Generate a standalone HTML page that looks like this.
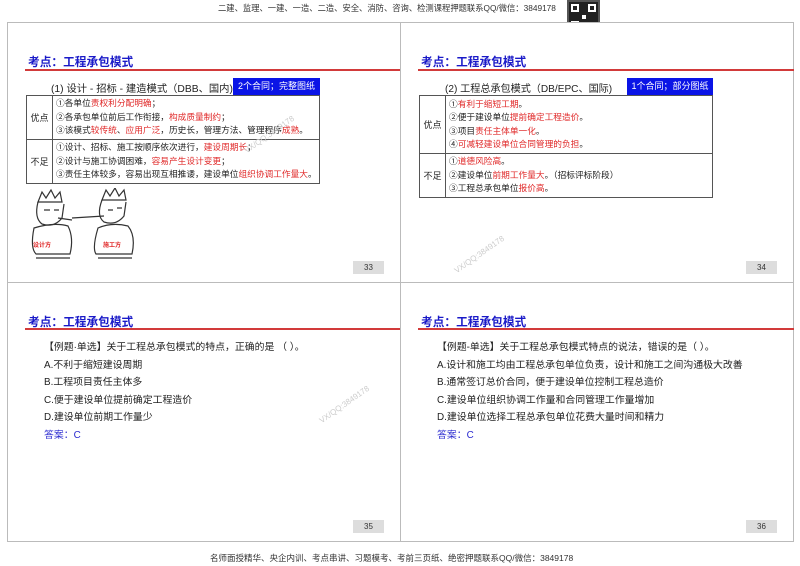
<!DOCTYPE html>
<html><head><meta charset="utf-8">
<style>
*{margin:0;padding:0;box-sizing:border-box}
body{width:800px;height:566px;background:#fff;position:relative;overflow:hidden;font-family:"Liberation Sans","Noto Sans CJK SC",sans-serif;color:#222}
.a{position:absolute;white-space:nowrap}
.slide{position:absolute;border:1px solid #bbb;background:#fff}
.title{position:absolute;font-size:11.7px;font-weight:bold;color:#1a1ac8}
.rl{position:absolute;height:2px;background:#d23a3a}
.pn{position:absolute;width:31px;height:13px;background:#ddd;font-size:8px;text-align:center;line-height:13px;color:#333}
.blue{position:absolute;background:#0a14e6;color:#fff;font-size:9px;text-align:center;line-height:17px;height:17px}
table{position:absolute;border-collapse:collapse;font-size:8.7px;table-layout:fixed}
td{border:1.3px solid #555;vertical-align:middle;white-space:nowrap}
td.l{width:26px;text-align:center;font-size:9px}
td.c{padding:0 3px;line-height:13.4px}
.r{color:#e02a2a}
.q{position:absolute;font-size:9.9px;line-height:17.5px;color:#222;white-space:nowrap}
.ans{color:#2a2ad0}
.wm{position:absolute;font-size:8px;color:#ccc;transform:rotate(-35deg);white-space:nowrap}
</style></head><body>
<div class="a" style="left:218px;top:2px;font-size:8.3px;color:#333">二建、监理、一建、一造、二造、安全、消防、咨询、检测课程押题联系QQ/微信：3849178</div>
<div class="a" style="left:567px;top:0;width:33px;height:33px;background:#222;border:2px solid #555">
<div style="position:absolute;left:2px;top:2px;width:8px;height:8px;border:2px solid #fff"></div>
<div style="position:absolute;right:2px;top:2px;width:8px;height:8px;border:2px solid #fff"></div>
<div style="position:absolute;left:2px;bottom:2px;width:8px;height:8px;border:2px solid #fff"></div>
<div style="position:absolute;left:13px;top:13px;width:4px;height:4px;background:#fff"></div></div>

<div class="slide" style="left:7px;top:22px;width:394px;height:261px"></div>
<div class="slide" style="left:400px;top:22px;width:394px;height:261px"></div>
<div class="slide" style="left:7px;top:282px;width:394px;height:260px"></div>
<div class="slide" style="left:400px;top:282px;width:394px;height:260px"></div>

<!-- slide 33 -->
<div class="title" style="left:28px;top:53px">考点：工程承包模式</div>
<div class="rl" style="left:25px;top:69px;width:375px"></div>
<div class="a" style="left:51px;top:80px;font-size:10.3px">(1) 设计 - 招标 - 建造模式（DBB、国内)</div>
<div class="blue" style="left:233px;top:78px;width:87px">2个合同；完整图纸</div>
<table style="left:26px;top:95px;width:294px">
<tr style="height:44px"><td class="l">优点</td><td class="c">①各单位<span class="r">责权利分配明确</span>；<br>②各承包单位前后工作衔接，<span class="r">构成质量制约</span>；<br>③该模式<span class="r">较传统</span>、<span class="r">应用广泛</span>，历史长，管理方法、管理程序<span class="r">成熟</span>。</td></tr>
<tr style="height:44px"><td class="l">不足</td><td class="c">①设计、招标、施工按顺序依次进行，<span class="r">建设周期长</span>；<br>②设计与施工协调困难，<span class="r">容易产生设计变更</span>；<br>③责任主体较多，容易出现互相推诿，建设单位<span class="r">组织协调工作量大</span>。</td></tr>
</table>
<svg class="a" style="left:24px;top:188px" width="120" height="74" viewBox="0 0 120 74" fill="none" stroke="#333" stroke-width="1.2">
<path d="M14 14 L18 4 L22 10 L27 2 L31 10 L36 4 L38 14 Z"/>
<path d="M14 14 Q10 30 18 36 Q30 40 38 30 L40 16"/>
<path d="M20 22 l6 0 M30 22 l5 0 M34 30 l14 2"/>
<path d="M10 40 Q6 60 12 66 L46 66 Q50 50 44 38 Q30 34 10 40Z"/>
<path d="M78 12 L82 2 L86 8 L91 0 L95 8 L100 2 L102 12 Z"/>
<path d="M78 12 Q72 28 80 34 Q92 38 100 28 L102 14"/>
<path d="M84 22 l5 0 M93 20 l5 0 M48 30 L80 28"/>
<path d="M74 40 Q68 60 72 66 L108 66 Q112 48 104 38 Q88 34 74 40Z"/>
<path d="M12 70 l34 0 M74 70 l34 0"/>
</svg>
<div class="a" style="left:33px;top:240px;font-size:6px;color:#e02a2a;font-weight:bold">设计方</div>
<div class="a" style="left:103px;top:240px;font-size:6px;color:#e02a2a;font-weight:bold">施工方</div>
<div class="pn" style="left:353px;top:261px">33</div>

<!-- slide 34 -->
<div class="title" style="left:421px;top:53px">考点：工程承包模式</div>
<div class="rl" style="left:418px;top:69px;width:376px"></div>
<div class="a" style="left:445px;top:80px;font-size:10.1px">(2) 工程总承包模式（DB/EPC、国际)</div>
<div class="blue" style="left:627px;top:78px;width:86px">1个合同；部分图纸</div>
<table style="left:419px;top:95px;width:294px">
<tr style="height:58px"><td class="l">优点</td><td class="c">①<span class="r">有利于缩短工期</span>。<br>②便于建设单位<span class="r">提前确定工程造价</span>。<br>③项目<span class="r">责任主体单一化</span>。<br>④<span class="r">可减轻建设单位合同管理的负担</span>。</td></tr>
<tr style="height:44px"><td class="l">不足</td><td class="c">①<span class="r">道德风险高</span>。<br>②建设单位<span class="r">前期工作量大</span>。（招标评标阶段）<br>③工程总承包单位<span class="r">报价高</span>。</td></tr>
</table>
<div class="pn" style="left:746px;top:261px">34</div>

<!-- slide 35 -->
<div class="title" style="left:28px;top:313px">考点：工程承包模式</div>
<div class="rl" style="left:25px;top:328px;width:375px"></div>
<div class="q" style="left:44px;top:339px">【例题·单选】关于工程总承包模式的特点，正确的是 （ ）。<br>A.不利于缩短建设周期<br>B.工程项目责任主体多<br>C.便于建设单位提前确定工程造价<br>D.建设单位前期工作量少<br><span class="ans">答案：C</span></div>
<div class="pn" style="left:353px;top:520px">35</div>

<!-- slide 36 -->
<div class="title" style="left:421px;top:313px">考点：工程承包模式</div>
<div class="rl" style="left:418px;top:328px;width:376px"></div>
<div class="q" style="left:437px;top:339px">【例题-单选】关于工程总承包模式特点的说法，错误的是（ ）。<br>A.设计和施工均由工程总承包单位负责，设计和施工之间沟通极大改善<br>B.通常签订总价合同，便于建设单位控制工程总造价<br>C.建设单位组织协调工作量和合同管理工作量增加<br>D.建设单位选择工程总承包单位花费大量时间和精力<br><span class="ans">答案：C</span></div>
<div class="pn" style="left:746px;top:520px">36</div>

<div class="wm" style="left:240px;top:130px">VX/QQ:3849178</div>
<div class="wm" style="left:450px;top:250px">VX/QQ:3849178</div>
<div class="wm" style="left:315px;top:400px">VX/QQ:3849178</div>

<div class="a" style="left:210px;top:552px;font-size:8.5px;color:#333">名师面授精华、央企内训、考点串讲、习题模考、考前三页纸、绝密押题联系QQ/微信：3849178</div>
</body></html>
